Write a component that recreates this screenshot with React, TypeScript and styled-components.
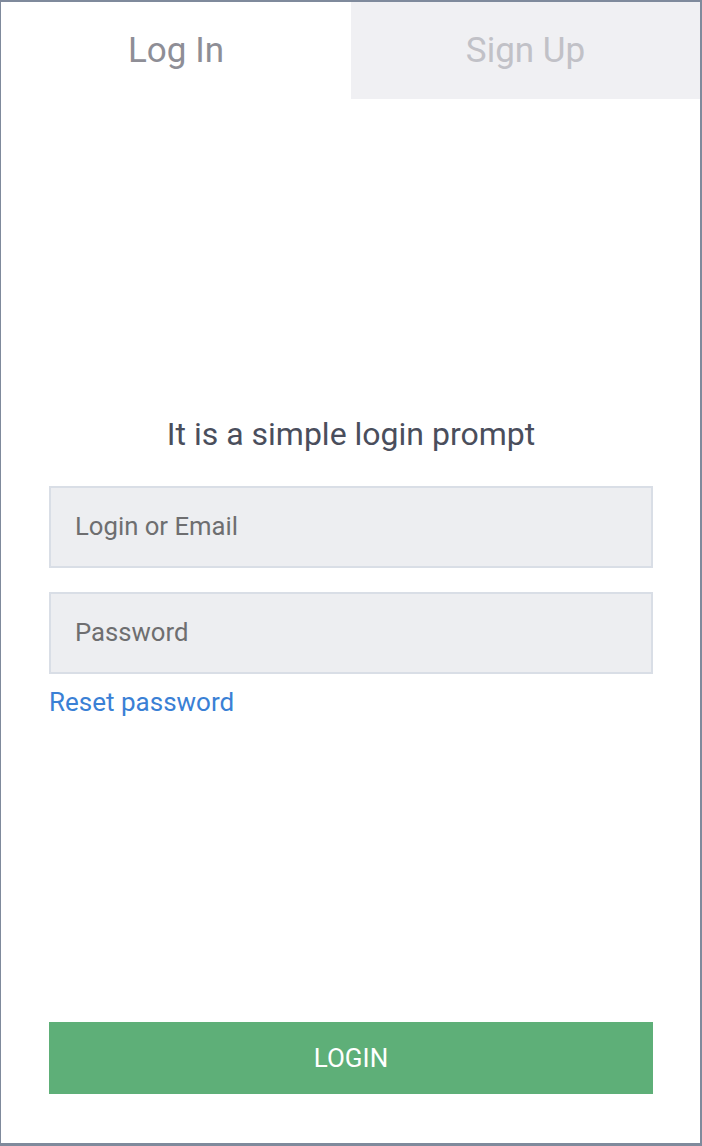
import React, { useState } from "react";
import styled, { createGlobalStyle } from "styled-components";

const GlobalStyle = createGlobalStyle`
  html, body { margin: 0; padding: 0; background: #ffffff; }
  body { font-family: Roboto, "Liberation Sans", Arial, sans-serif; }
  * { box-sizing: border-box; }
`;

const Frame = styled.div`
  width: 702px;
  height: 1146px;
  display: flex;
  flex-direction: column;
  background: #ffffff;
  border-style: solid;
  border-color: #7f8a9c;
  border-width: 2px 2px 3px 1px;
`;

const Tabs = styled.div`
  display: grid;
  grid-template-columns: 350px 1fr;
  height: 97px;
`;

const Tab = styled.button<{ $active?: boolean }>`
  border: none;
  margin: 0;
  padding: 0;
  cursor: pointer;
  font-family: Roboto, "Liberation Sans", Arial, sans-serif;
  font-size: 35px;
  font-weight: 400;
  background: ${(p) => (p.$active ? "#ffffff" : "#f0f0f3")};
  color: ${(p) => (p.$active ? "#8e8e96" : "#c1c1c7")};
  display: flex;
  align-items: center;
  justify-content: center;
`;

const Body = styled.div`
  flex: 1;
  display: flex;
  flex-direction: column;
  padding: 0 47px 49px 48px;
`;

const Heading = styled.h2`
  margin: 316px 0 0;
  font-size: 32px;
  font-weight: 400;
  line-height: 38px;
  color: #4a4e5c;
  text-align: center;
`;

const Input = styled.input`
  display: block;
  width: 100%;
  height: 82px;
  margin: 0;
  padding: 0 0 2px 24px;
  border: 2px solid #d9dee6;
  background: #edeef1;
  font-family: Roboto, "Liberation Sans", Arial, sans-serif;
  font-size: 25.7px;
  color: #333;
  outline: none;
  &::placeholder { color: #6e6e70; }
`;

const Fields = styled.div`
  display: flex;
  flex-direction: column;
  gap: 24px;
  margin-top: 33px;
`;

const ResetLink = styled.a`
  align-self: flex-start;
  margin-top: 13px;
  font-size: 26px;
  line-height: 30px;
  color: #3a80d5;
  text-decoration: none;
  cursor: pointer;
`;

const SubmitButton = styled.button`
  margin-top: auto;
  width: 100%;
  height: 72px;
  border: none;
  background: #5eaf78;
  color: #ffffff;
  font-family: Roboto, "Liberation Sans", Arial, sans-serif;
  font-size: 26px;
  font-weight: 400;
  cursor: pointer;
`;

export default function App() {
  const [tab, setTab] = useState<"login" | "signup">("login");
  return (
    <>
      <GlobalStyle />
      <Frame>
        <Tabs>
          <Tab $active={tab === "login"} onClick={() => setTab("login")}>Log In</Tab>
          <Tab $active={tab === "signup"} onClick={() => setTab("signup")}>Sign Up</Tab>
        </Tabs>
        <Body>
          <Heading>It is a simple login prompt</Heading>
          <Fields>
            <Input placeholder="Login or Email" />
            <Input type="password" placeholder="Password" />
          </Fields>
          <ResetLink>Reset password</ResetLink>
          <SubmitButton>LOGIN</SubmitButton>
        </Body>
      </Frame>
    </>
  );
}
